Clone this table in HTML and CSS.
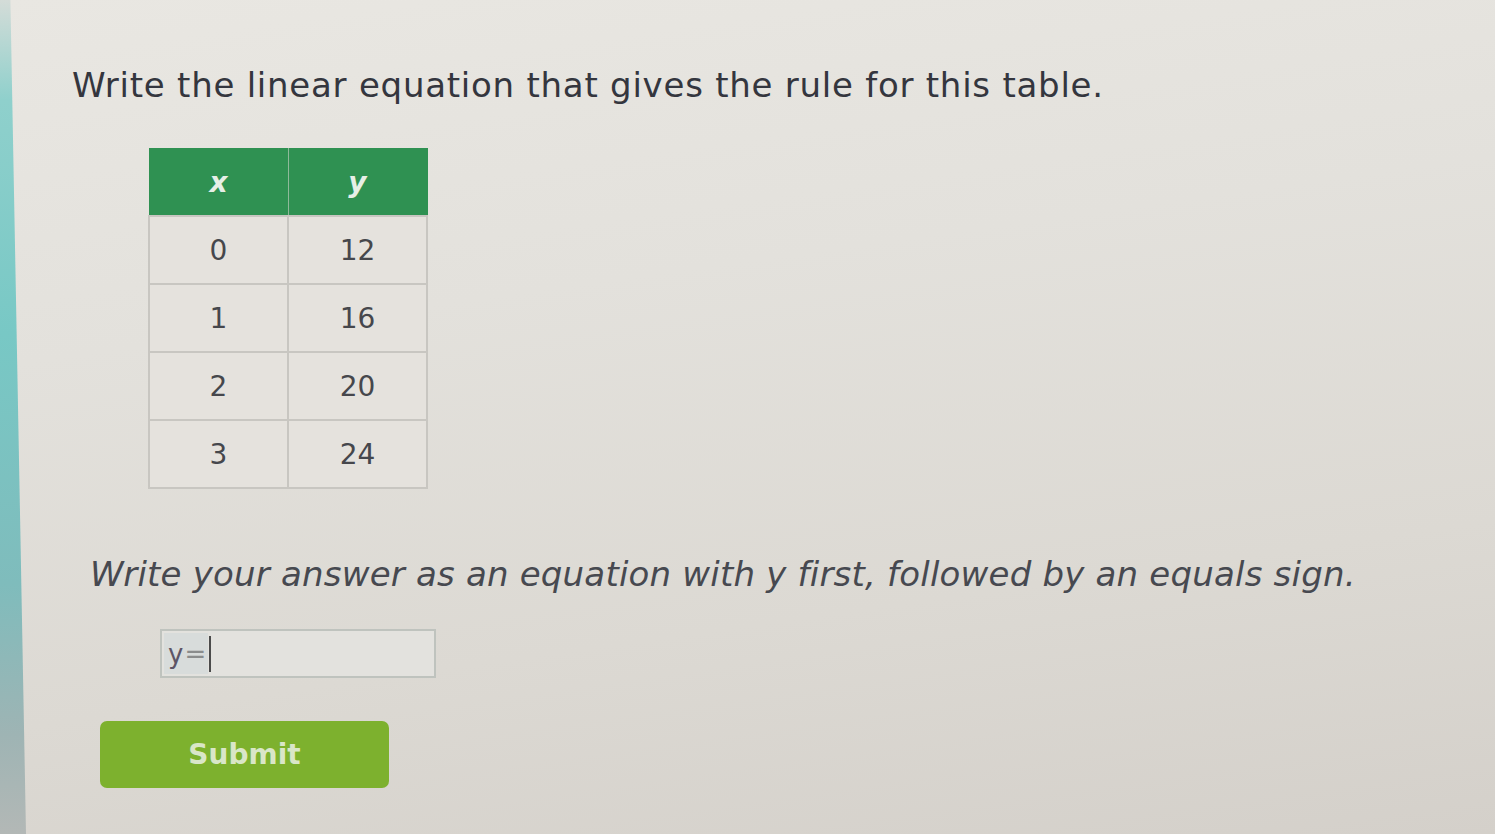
FILE: index.html
```html
<!DOCTYPE html>
<html>
<head>
<meta charset="utf-8">
<link rel="stylesheet" href="styles.css">
</head>
<body>
<div class="page">
  <div class="strip"></div>
  <main class="content">
    <h1 class="question">Write the linear equation that gives the rule for this table.</h1>
    <table class="rule-table">
      <thead>
        <tr><th>x</th><th>y</th></tr>
      </thead>
      <tbody>
        <tr><td>0</td><td>12</td></tr>
        <tr><td>1</td><td>16</td></tr>
        <tr><td>2</td><td>20</td></tr>
        <tr><td>3</td><td>24</td></tr>
      </tbody>
    </table>
    <p class="instruction">Write your answer as an equation with y first, followed by an equals sign.</p>
    <div class="answer">
      <span class="prefix"><span class="var">y</span><span class="eq">=</span></span><span class="caret"></span>
    </div>
    <button class="submit">Submit</button>
  </main>
</div>
</body>
</html>
```

FILE: styles.css
```css
html, body {
  margin: 0;
  padding: 0;
  height: 100%;
}
body {
  font-family: "DejaVu Sans", Verdana, sans-serif;
  color: #3c3e45;
  background: #e0ddd7;
  overflow: hidden;
}
.page {
  display: flex;
  width: 1495px;
  height: 834px;
  background: linear-gradient(172deg, #e9e7e2 0%, #e3e1dc 35%, #dcd9d3 70%, #d4d0ca 100%);
}
.strip {
  width: 26px;
  flex: none;
  clip-path: polygon(0 0, 40% 0, 100% 100%, 0 100%);
  background: linear-gradient(180deg, #d4dcd8 0%, #8fd0cc 12%, #78c8c5 40%, #7fbcbc 70%, #9eb4b4 88%, #b3b8b6 100%);
}
.content {
  flex: 1;
  padding: 65px 0 0 46px;
  display: flex;
  flex-direction: column;
  align-items: flex-start;
}
.question {
  margin: 0;
  font-size: 34px;
  font-weight: normal;
  letter-spacing: 0.75px;
  color: #34363e;
  line-height: 40px;
}
.rule-table {
  margin: 43px 0 0 76px;
  border-collapse: collapse;
  font-size: 28px;
  color: #46474c;
}
.rule-table th {
  background: #2f9152;
  color: #e6efe7;
  font-style: italic;
  font-weight: bold;
  height: 66px;
  width: 138px;
  padding: 0;
  border: 1px solid #8fb99a;
  border-top-color: #2f9152;
}
.rule-table th:first-child { border-left-color: #2f9152; }
.rule-table th:last-child { border-right-color: #2f9152; }
.rule-table td {
  height: 66px;
  padding: 0;
  text-align: center;
  border: 2px solid #c8c6c1;
  background: #e5e2dd;
}
.instruction {
  margin: 65px 0 0 18px;
  font-size: 34px;
  font-style: italic;
  color: #474950;
  letter-spacing: 0.2px;
  line-height: 40px;
}
.answer {
  margin: 35px 0 0 88px;
  width: 270px;
  height: 45px;
  border: 2px solid #bfc3be;
  background: #e3e2de;
  display: flex;
  align-items: center;
  padding: 0 0 0 2px;
}
.prefix {
  display: flex;
  align-items: center;
  height: 41px;
  padding: 0 2px 0 4px;
  background: #d8dcdb;
  font-size: 26px;
}
.var { color: #5d5566; }
.eq { color: #8a8c8c; margin-left: 1px; }
.caret {
  width: 2px;
  height: 36px;
  background: #4b4b4b;
  margin-left: 1px;
}
.submit {
  margin: 43px 0 0 28px;
  width: 289px;
  height: 67px;
  border: none;
  border-radius: 7px;
  background: #7db12e;
  color: #d9e6c8;
  font-family: "DejaVu Sans", Verdana, sans-serif;
  font-weight: bold;
  font-size: 28px;
  padding: 0;
  text-align: center;
}
```
